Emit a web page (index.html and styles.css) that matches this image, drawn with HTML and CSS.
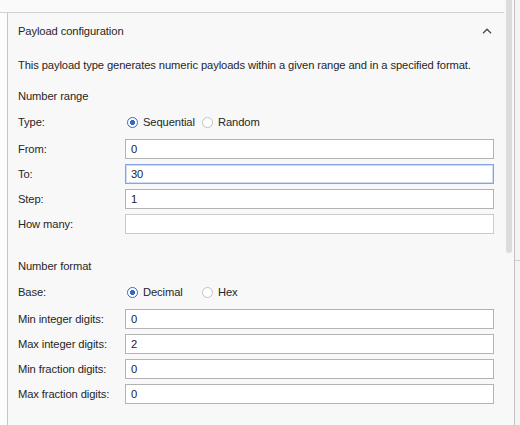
FILE: index.html
```html
<!DOCTYPE html>
<html>
<head>
<meta charset="utf-8">
<link rel="stylesheet" href="styles.css">
</head>
<body>
<div class="frame">
  <div class="topstrip"></div>
  <div class="main">
    <div class="gutter"></div>
    <div class="panel">
      <div class="header">
        <span class="title">Payload configuration</span>
        <svg class="chevron" width="10" height="6" viewBox="0 0 10 6"><path d="M1 5.2 L5 1.2 L9 5.2" fill="none" stroke="#4a4a4a" stroke-width="1.3"/></svg>
      </div>
      <p class="desc">This payload type generates numeric payloads within a given range and in a specified format.</p>

      <div class="section-title">Number range</div>
      <div class="row radio-row">
        <span class="label">Type:</span>
        <div class="radios">
          <span class="opt first"><span class="radio checked"></span>Sequential</span>
          <span class="opt"><span class="radio"></span>Random</span>
        </div>
      </div>
      <div class="fields">
        <div class="row"><span class="label">From:</span><div class="input">0</div></div>
        <div class="row"><span class="label">To:</span><div class="input focused">30</div></div>
        <div class="row"><span class="label">Step:</span><div class="input">1</div></div>
        <div class="row"><span class="label">How many:</span><div class="input disabled"></div></div>
      </div>

      <div class="section-title second">Number format</div>
      <div class="row radio-row">
        <span class="label">Base:</span>
        <div class="radios">
          <span class="opt first"><span class="radio checked"></span>Decimal</span>
          <span class="opt"><span class="radio"></span>Hex</span>
        </div>
      </div>
      <div class="fields">
        <div class="row"><span class="label">Min integer digits:</span><div class="input">0</div></div>
        <div class="row"><span class="label">Max integer digits:</span><div class="input">2</div></div>
        <div class="row"><span class="label">Min fraction digits:</span><div class="input">0</div></div>
        <div class="row"><span class="label">Max fraction digits:</span><div class="input">0</div></div>
      </div>
    </div>
    <div class="scrollbar"><div class="thumb"></div></div>
    <div class="side"><div class="side-top"></div></div>
  </div>
</div>
</body>
</html>
```

FILE: styles.css
```css
* { box-sizing: border-box; }
html, body { margin: 0; padding: 0; }
body {
  width: 520px;
  height: 425px;
  overflow: hidden;
  background: #f8f8f8;
  font-family: "Liberation Sans", Arial, sans-serif;
  font-size: 11.2px;
  letter-spacing: -0.1px;
  color: #262626;
}
.frame { display: flex; flex-direction: column; height: 425px; }
.topstrip {
  height: 13px;
  background: #fafafa;
  border-bottom: 1px solid #d2d2d2;
  margin-right: 16px;
}
.main { display: flex; flex: 1; }
.gutter {
  width: 8px;
  background: #fdfdfd;
  border-right: 1px solid #c6c6c6;
}
.panel {
  width: 497px;
  padding: 0 10px 0 10px;
  background: #f8f8f8;
}
.header {
  display: flex;
  align-items: center;
  justify-content: space-between;
  height: 36px;
  padding-right: 1px;
}
.title { line-height: 16px; }
.chevron { display: block; margin-right: 2px; }
.desc { margin: 8px 0 0 0; line-height: 16px; white-space: nowrap; }
.section-title { margin-top: 15px; line-height: 16px; }
.section-title.second { margin-top: 24px; }
.row { display: flex; align-items: center; height: 20px; }
.radio-row { margin-top: 8px; }
.label { width: 107px; flex: none; line-height: 16px; }
.radios { display: flex; align-items: center; padding-left: 2px; }
.opt { display: flex; align-items: center; gap: 5px; }
.opt.first { width: 75px; }
.radio {
  width: 11px; height: 11px;
  border-radius: 50%;
  border: 1px solid #c2c2c2;
  background: #fff;
  flex: none;
}
.radio.checked {
  border: 1.5px solid #3468cc;
  background: radial-gradient(circle, #3468cc 0 2.3px, #fff 2.8px);
}
.fields { display: flex; flex-direction: column; gap: 5px; margin-top: 7px; }
.input {
  width: 369px;
  height: 20px;
  border: 1px solid #b3b3b3;
  background: #fff;
  padding: 0 5px;
  line-height: 18px;
  color: #222;
}
.input.focused {
  border-color: #86a5df;
  box-shadow: inset 0 0 0 1px #cddbf4;
}
.input.disabled { border-color: #cacaca; }
.scrollbar {
  width: 8px;
  padding-left: 1px;
  background: #f8f8f8;
  margin-top: -13px;
}
.thumb {
  width: 6px;
  height: 253px;
  background: #dcdcdc;
  border-radius: 0 0 3px 3px;
}
.side {
  flex: 1;
  margin-top: -13px;
  border-left: 1px solid #c4c4c4;
  background: #f4f4f4;
  margin-left: 1px;
}
.side-top { height: 261px; border-bottom: 1px solid #cfcfcf; }
```
